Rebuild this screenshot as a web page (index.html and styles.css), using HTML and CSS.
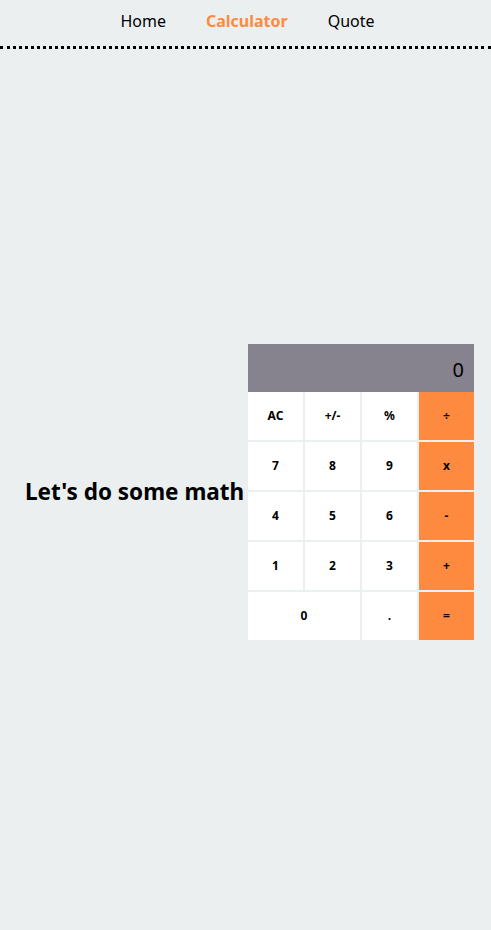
FILE: index.html
```html
<!DOCTYPE html>
<html>
<head>
<meta charset="utf-8">
<link rel="stylesheet" href="styles.css">
</head>
<body>
<header class="nav">
  <a class="nav-link" href="#">Home</a>
  <a class="nav-link active" href="#">Calculator</a>
  <a class="nav-link" href="#">Quote</a>
</header>
<main class="main">
  <h1 class="title">Let's do some math</h1>
  <div class="calc">
    <div class="display">0</div>
    <div class="keys">
      <button class="key">AC</button>
      <button class="key">+/-</button>
      <button class="key">%</button>
      <button class="key op">÷</button>
      <button class="key">7</button>
      <button class="key">8</button>
      <button class="key">9</button>
      <button class="key op">x</button>
      <button class="key">4</button>
      <button class="key">5</button>
      <button class="key">6</button>
      <button class="key op">-</button>
      <button class="key">1</button>
      <button class="key">2</button>
      <button class="key">3</button>
      <button class="key op">+</button>
      <button class="key wide">0</button>
      <button class="key">.</button>
      <button class="key op">=</button>
    </div>
  </div>
</main>
</body>
</html>
```
FILE: styles.css
```css
html, body {
  margin: 0;
  padding: 0;
  background: #ebeff0;
  font-family: "Noto Sans", "Open Sans", sans-serif;
}
.nav {
  height: 46px;
  display: flex;
  justify-content: center;
  align-items: center;
  gap: 40px;
  border-bottom: 3px dotted #000;
  padding-left: 4px;
  box-sizing: content-box;
}
.nav-link {
  color: #000;
  text-decoration: none;
  font-size: 16px;
  line-height: 1;
  margin-top: -4px;
}
.nav-link.active {
  color: #fe8a3f;
  font-weight: bold;
}
.main {
  display: flex;
  align-items: center;
  justify-content: flex-start;
  height: 881px;
  padding-top: 4px;
  padding-left: 25px;
  box-sizing: border-box;
}
.title {
  margin: 0;
  width: 223px;
  flex-shrink: 0;
  white-space: nowrap;
  font-size: 22.5px;
  font-weight: bold;
  color: #000;
}
.calc {
  width: 226px;
}
.display {
  height: 48px;
  background: #86838f;
  color: #000;
  font-size: 20px;
  display: flex;
  align-items: center;
  justify-content: flex-end;
  padding-right: 10px;
  padding-top: 3px;
  box-sizing: border-box;
}
.keys {
  display: grid;
  grid-template-columns: repeat(4, 55px);
  grid-auto-rows: 48px;
  gap: 2px;
}
.key {
  border: none;
  margin: 0;
  padding: 0;
  background: #fff;
  font-family: inherit;
  font-size: 12px;
  font-weight: bold;
  color: #000;
}
.key.op {
  background: #fe8a3f;
}
.key.wide {
  grid-column: span 2;
}
```
